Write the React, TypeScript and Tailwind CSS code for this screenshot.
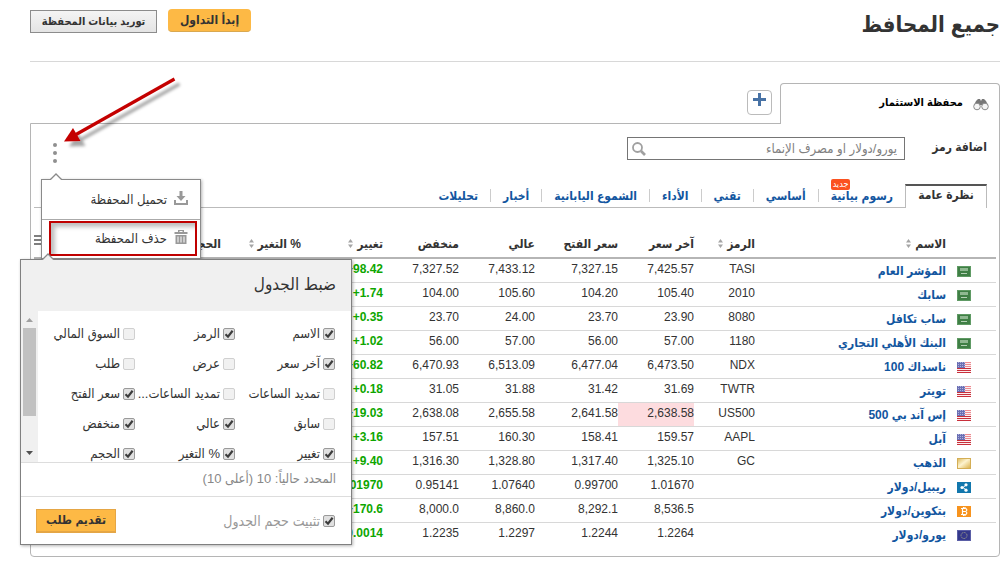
import { useState } from "react";

type Flag = "sa" | "us" | "gold" | "xrp" | "btc" | "eu";

type Row = {
  flag: Flag;
  name: string;
  symbol: string;
  last: string;
  open: string;
  high: string;
  low: string;
  change: string;
  down?: boolean;
};

const rows: Row[] = [
  { flag: "sa", name: "المؤشر العام", symbol: "TASI", last: "7,425.57", open: "7,327.15", high: "7,433.12", low: "7,327.52", change: "+98.42" },
  { flag: "sa", name: "سابك", symbol: "2010", last: "105.40", open: "104.20", high: "105.60", low: "104.00", change: "+1.74" },
  { flag: "sa", name: "ساب تكافل", symbol: "8080", last: "23.90", open: "23.70", high: "24.00", low: "23.70", change: "+0.35" },
  { flag: "sa", name: "البنك الأهلي التجاري", symbol: "1180", last: "57.00", open: "56.00", high: "57.00", low: "56.00", change: "+1.02" },
  { flag: "us", name: "ناسداك 100", symbol: "NDX", last: "6,473.50", open: "6,477.04", high: "6,513.09", low: "6,470.93", change: "+60.82" },
  { flag: "us", name: "تويتر", symbol: "TWTR", last: "31.69", open: "31.42", high: "31.88", low: "31.05", change: "+0.18" },
  { flag: "us", name: "إس آند بي 500", symbol: "US500", last: "2,638.58", open: "2,641.58", high: "2,655.58", low: "2,638.08", change: "+19.03", down: true },
  { flag: "us", name: "آبل", symbol: "AAPL", last: "159.57", open: "158.41", high: "160.30", low: "157.51", change: "+3.16" },
  { flag: "gold", name: "الذهب", symbol: "GC", last: "1,325.10", open: "1,317.40", high: "1,328.80", low: "1,316.30", change: "+9.40" },
  { flag: "xrp", name: "ريبيل/دولار", symbol: "", last: "1.01670", open: "0.99700", high: "1.07640", low: "0.95141", change: "+0.01970" },
  { flag: "btc", name: "بتكوين/دولار", symbol: "", last: "8,536.5", open: "8,292.1", high: "8,860.0", low: "8,000.0", change: "+170.6" },
  { flag: "eu", name: "يورو/دولار", symbol: "", last: "1.2264", open: "1.2244", high: "1.2297", low: "1.2235", change: "+0.0014" },
];

const views = ["رسوم بيانية", "أساسي", "تقني", "الأداء", "الشموع اليابانية", "أخبار", "تحليلات"];

const options = [
  { label: "الاسم", on: true },
  { label: "الرمز", on: true },
  { label: "السوق المالي", on: false },
  { label: "آخر سعر", on: true },
  { label: "عرض", on: false },
  { label: "طلب", on: false },
  { label: "تمديد الساعات", on: false },
  { label: "تمديد الساعات...", on: false },
  { label: "سعر الفتح", on: true },
  { label: "سابق", on: false },
  { label: "عالي", on: true },
  { label: "منخفض", on: true },
  { label: "تغيير", on: true },
  { label: "% التغير", on: true },
  { label: "الحجم", on: true },
];

function FlagIcon({ flag }: { flag: Flag }) {
  return (
    <svg viewBox="0 0 14 11" className="block h-[11px] w-[14px]" aria-hidden="true">
      {flag === "sa" && (
        <>
          <rect width="14" height="11" fill="#3f7f45" />
          <rect x="0.5" y="0.5" width="13" height="10" fill="none" stroke="#5f9a64" />
          <rect x="3" y="2" width="8" height="3" fill="#8fb891" />
          <rect x="4" y="7" width="6" height="1" fill="#b4d0b5" />
        </>
      )}
      {flag === "us" && (
        <>
          <rect width="14" height="11" fill="#fbeeee" />
          {[0, 2, 4, 6, 8, 10].map((y) => (
            <rect key={y} y={y} width="14" height="1" fill={y > 5 ? "#c9303c" : "#ee8a90"} />
          ))}
          <rect width="8" height="6" fill="#6a6fb4" />
          {[1, 3, 5].map((y) =>
            [1, 3, 5, 7].map((x) => <rect key={`${x}-${y}`} x={x} y={y - 1} width="1" height="1" fill="#aeb1da" />)
          )}
        </>
      )}
      {flag === "gold" && (
        <>
          <defs>
            <linearGradient id="gold" x1="0" y1="0" x2="1" y2="1">
              <stop offset="0" stopColor="#dcb85a" />
              <stop offset="0.45" stopColor="#fdf3cf" />
              <stop offset="1" stopColor="#d9ae45" />
            </linearGradient>
          </defs>
          <rect x="0.5" y="0.5" width="13" height="10" fill="url(#gold)" stroke="#d4ae55" />
        </>
      )}
      {flag === "xrp" && (
        <>
          <rect width="14" height="11" fill="#1277ad" />
          <path d="M9 3 6 5.5 9 8" stroke="#fff" fill="none" />
          <circle cx="9" cy="2.8" r="1.6" fill="#fff" />
          <circle cx="9" cy="8.2" r="1.6" fill="#fff" />
          <circle cx="5" cy="5.5" r="1.6" fill="#fff" />
        </>
      )}
      {flag === "btc" && (
        <>
          <rect width="14" height="11" fill="#f7931e" />
          <path
            d="M4 2.5H8.3A1.4 1.4 0 0 1 8.3 5.5H5.5M8.3 5.5A1.5 1.5 0 0 1 8.3 8.5H4M5.5 2.5V8.5M6.5 1V2.5M8 1V2.5M6.5 8.5V10M8 8.5V10"
            stroke="#fff"
            strokeWidth="1.2"
            fill="none"
          />
        </>
      )}
      {flag === "eu" && (
        <>
          <rect width="14" height="11" fill="#34388a" />
          <rect x="0.5" y="0.5" width="13" height="10" fill="none" stroke="#5a5ea6" />
          <circle cx="7" cy="5.5" r="3" fill="none" stroke="#a3a58c" strokeDasharray="1 0.7" />
        </>
      )}
    </svg>
  );
}

function SortIcon() {
  return (
    <svg viewBox="0 0 5 9" className="h-[9px] w-[5px]" aria-hidden="true">
      <path d="M0 3.5 2.5 0 5 3.5zM0 5.5 2.5 9 5 5.5z" fill="#a5a5a5" />
    </svg>
  );
}

function Caret({ fill }: { fill: string }) {
  return (
    <svg viewBox="0 0 12 7" className="h-[7px] w-3" aria-hidden="true">
      <path d="M0 7 6 1 12 7z" fill={fill} />
      <path d="M0 6.5H0.5L6 1 11.5 6.5H12" fill="none" stroke="#8a8a8a" strokeWidth="1.3" />
    </svg>
  );
}

function CheckBox({ label, on }: { label: string; on: boolean }) {
  const [checked, setChecked] = useState(on);
  return (
    <label className="flex items-center gap-[3px] whitespace-nowrap">
      <span className="relative block size-3 shrink-0">
        <input
          type="checkbox"
          checked={checked}
          onChange={(e) => setChecked(e.target.checked)}
          className="block size-3 appearance-none rounded-xs border border-[#d0d0d0] bg-[#f1f1f1] checked:border-[#9a9a9a] checked:bg-[#e0e0e0]"
        />
        {checked && (
          <svg viewBox="0 0 12 12" className="pointer-events-none absolute inset-0 size-3" aria-hidden="true">
            <path d="M2.5 6.2 5 8.7 9.6 2.8" fill="none" stroke="#3c3c3c" strokeWidth="2.2" />
          </svg>
        )}
      </span>
      {label}
    </label>
  );
}

function PortfolioMenu() {
  return (
    <div className="absolute top-[55px] left-[10px] z-10 w-40 border border-[#8a8a8a] bg-white text-[13px] text-[#333] shadow-[1px_1px_3px_rgba(0,0,0,0.3)]">
      <div className="absolute -top-[7px] left-2">
        <Caret fill="#fff" />
      </div>
      <button type="button" className="flex h-10 w-full items-center gap-[7px] border-b border-[#aaa] px-3">
        <svg viewBox="0 0 14 14" className="-mt-1 size-[14px]" aria-hidden="true">
          <path d="M5.5 0H8.5V5H11.5L7 10 2.5 5H5.5zM0 9H2V12H12V9H14V14H0z" fill="#999" />
        </svg>
        تحميل المحفظة
      </button>
      <button type="button" className="flex h-[38px] w-full items-center gap-[7px] px-3">
        <svg viewBox="0 0 14 14" className="-mt-1 size-[14px]" aria-hidden="true">
          <path d="M4 0H10V2H13.5V4H0.5V2H4zM5.5 1V2H8.5V1z" fill="#999" fillRule="evenodd" />
          <path
            d="M1.5 5H12.5V14H1.5zM3.5 6.5V12.5H4.5V6.5zM6.5 6.5V12.5H7.5V6.5zM9.5 6.5V12.5H10.5V6.5z"
            fill="#999"
            fillRule="evenodd"
          />
        </svg>
        حذف المحفظة
      </button>
      <div className="pointer-events-none absolute top-[41px] right-[3px] left-[7px] h-[35px] border-2 border-[#c00000] shadow-[inset_4px_4px_4px_rgba(0,0,0,0.25)]" />
    </div>
  );
}

function TableSettings() {
  return (
    <section
      aria-label="ضبط الجدول"
      className="absolute top-[135px] -left-[11px] z-20 w-[332px] border border-[#808080] bg-white text-[13px] text-[#333] shadow-[1px_1px_3px_rgba(0,0,0,0.3)]"
    >
      <div className="absolute -top-[7px] left-[21px]">
        <Caret fill="#f0f0f0" />
      </div>
      <h2 className="h-[51px] bg-[#f0f0f0] px-[15px] text-[17px] leading-[50px]">ضبط الجدول</h2>
      <div className="flex h-[151px] overflow-hidden">
        <div className="grid flex-1 auto-rows-[30px] grid-cols-[100px_100px_1fr] pt-2 pr-4">
          {options.map((option) => (
            <CheckBox key={option.label} {...option} />
          ))}
        </div>
        <div className="flex w-[17px] flex-col items-center bg-[#f0f0f0] py-[7px]" aria-hidden="true">
          <svg viewBox="0 0 7 4" className="h-1 w-[7px]">
            <path d="M0 4 3.5 0 7 4z" fill="#a0a0a0" />
          </svg>
          <div className="mt-[6px] h-[88px] w-[13px] bg-[#c1c1c1]" />
          <svg viewBox="0 0 7 4" className="mt-auto h-1 w-[7px]">
            <path d="M0 0H7L3.5 4z" fill="#505050" />
          </svg>
        </div>
      </div>
      <p className="h-[35px] border-y border-[#ddd] px-[15px] leading-8 text-[#888]">المحدد حالياً: 10 (أعلى 10)</p>
      <div className="flex h-[47px] items-center justify-between pr-4 pl-[15px] text-sm text-[#999]">
        <CheckBox label="تثبيت حجم الجدول" on />
        <button type="button" className="h-6 w-20 border border-b-2 border-[#e5a645] bg-[#fdb945] text-xs leading-5 font-bold text-[#333]">
          تقديم طلب
        </button>
      </div>
    </section>
  );
}

export default function App() {
  return (
    <main
      dir="rtl"
      className="relative bg-white pr-1 pb-3 pl-[30px] font-['Liberation_Sans','DejaVu_Sans_Condensed','DejaVu_Sans',sans-serif] text-xs text-[#333]"
    >
      <header className="flex h-[62px] items-start justify-between border-b border-[#d8d8d8] pt-[9px]">
        <h1 className="text-[22px] leading-8 font-bold">جميع المحافظ</h1>
        <div className="flex items-start gap-[11px]">
          <button type="button" className="h-[23px] w-[83px] rounded-sm border-b border-[#d9a850] bg-[#fdb945] font-bold">
            إبدأ التداول
          </button>
          <button
            type="button"
            className="mt-px h-[23px] w-[127px] border border-[#8c8c8c] bg-linear-to-b from-[#f4f4f4] to-[#e4e4e4] text-[11px] font-bold"
          >
            توريد بيانات المحفظة
          </button>
        </div>
      </header>

      <nav className="mt-[21px] flex items-start gap-2">
        <a
          href="#portfolio"
          className="z-10 -mb-px flex h-[41px] w-[220px] items-center gap-[10px] rounded-t-sm border border-b-0 border-[#b5b5b5] bg-white px-[10px] pb-1 text-[11px] font-bold text-black"
        >
          <svg viewBox="0 0 16 13" className="mt-1 h-[13px] w-4" aria-hidden="true">
            <path d="M3 3 5 1H7L8 3 9 1H11L13 3 15 7H1z" fill="#777" />
            <circle cx="4" cy="8.5" r="3.3" fill="#f5f5f5" stroke="#8a8a8a" />
            <circle cx="12" cy="8.5" r="3.3" fill="#f5f5f5" stroke="#8a8a8a" />
          </svg>
          محفظة الاستثمار
        </a>
        <button
          type="button"
          aria-label="إضافة محفظة"
          className="mt-[7px] flex h-[25px] w-[25px] justify-center rounded-sm border border-[#bbb] bg-white pt-[2px]"
        >
          <svg viewBox="0 0 13 13" className="size-[13px]" aria-hidden="true">
            <path d="M5 0H8V5H13V8H8V13H5V8H0V5H5z" fill="#4872a5" />
          </svg>
        </button>
      </nav>

      <div className="relative rounded-b-sm border border-[#b5b5b5] px-[3px] pb-[9px]">
        <div className="flex items-center pt-[13px] pr-[9px]">
          <label htmlFor="symbol" className="w-[82px] pb-1 font-bold">
            اضافة رمز
          </label>
          <div className="relative w-[278px]">
            <input
              id="symbol"
              type="text"
              placeholder="يورو/دولار او مصرف الإنماء"
              className="block h-[23px] w-full border border-[#757575] px-[7px] text-[13px] placeholder:text-[#808080]"
            />
            <svg viewBox="0 0 14 14" className="absolute top-[5px] left-[5px] size-[14px]" aria-hidden="true">
              <circle cx="5.5" cy="5.5" r="4.5" fill="none" stroke="#a0a0a0" strokeWidth="1.8" />
              <path d="M9 9 13 13" stroke="#a0a0a0" strokeWidth="2.6" />
            </svg>
          </div>
        </div>

        <nav className="mt-6 mr-[9px] flex h-6 border-b border-[#bbb]">
          <a
            href="#overview"
            className="flex h-6 w-[82px] items-center justify-center border-x border-t-2 border-x-[#bbb] border-t-[#555] bg-white pb-1 font-bold"
          >
            نظرة عامة
          </a>
          <ul className="flex items-center divide-x divide-[#ccc]">
            {views.map((view, i) => (
              <li key={view} className="relative flex h-[13px] items-center px-3">
                <a href="#view" className="font-bold whitespace-nowrap text-[#1256a0]">
                  {view}
                </a>
                {i === 0 && (
                  <span className="absolute -top-[10px] left-3 h-[11px] rounded-xs bg-[#fb5220] px-[2px] text-[9px] leading-[11px] text-white">
                    جديد
                  </span>
                )}
              </li>
            ))}
          </ul>
        </nav>

        <table className="mt-[22px] w-full table-fixed border-collapse">
          <colgroup>
            <col className="w-[50px]" />
            <col />
            <col className="w-[61px]" />
            <col className="w-[76px]" />
            <col className="w-[83px]" />
            <col className="w-[76px]" />
            <col className="w-[76px]" />
            <col className="w-[82px]" />
            <col className="w-[80px]" />
            <col className="w-[150px]" />
            <col className="w-[37px]" />
          </colgroup>
          <thead>
            <tr className="h-7 border-b-2 border-[#b5b5b5] text-right whitespace-nowrap">
              <th />
              <th>
                <span className="flex items-center gap-1">الاسم <SortIcon /></span>
              </th>
              <th>
                <span className="flex items-center gap-1">الرمز <SortIcon /></span>
              </th>
              <th>آخر سعر</th>
              <th>سعر الفتح</th>
              <th>عالي</th>
              <th>منخفض</th>
              <th>
                <span className="flex items-center gap-1">تغيير <SortIcon /></span>
              </th>
              <th>
                <span className="flex items-center gap-1">% التغير <SortIcon /></span>
              </th>
              <th>الحجم</th>
              <th className="pb-2">
                <button type="button" aria-label="ضبط الجدول" className="mr-auto block w-[9px]">
                  <svg viewBox="0 0 9 10" className="h-[10px] w-[9px]" aria-hidden="true">
                    <path d="M0 1H9M0 5H9M0 9H9" stroke="#555" strokeWidth="1.5" />
                  </svg>
                </button>
              </th>
            </tr>
          </thead>
          <tbody>
            {rows.map((row) => (
              <tr key={row.name} className="h-6 border-b border-[#d8d8d8] text-right leading-5 last:border-b-0">
                <td className="pt-[2px] pr-[25px]">
                  <FlagIcon flag={row.flag} />
                </td>
                <td className="font-bold whitespace-nowrap text-[#1256a0]">
                  <a href="#quote">{row.name}</a>
                </td>
                <td dir="ltr" className="pb-[3px]">{row.symbol}</td>
                <td dir="ltr" className={row.down ? "bg-[#fddcdf] pb-[3px]" : "pb-[3px]"}>{row.last}</td>
                <td dir="ltr" className="pb-[3px]">{row.open}</td>
                <td dir="ltr" className="pb-[3px]">{row.high}</td>
                <td dir="ltr" className="pb-[3px]">{row.low}</td>
                <td dir="ltr" className="pb-[3px] font-bold text-[#0ea600]">{row.change}</td>
                <td />
                <td />
                <td />
              </tr>
            ))}
          </tbody>
        </table>

        <button type="button" aria-label="خيارات المحفظة" className="absolute top-[19px] left-[22px]">
          <svg viewBox="0 0 4 20" className="h-5 w-1" aria-hidden="true">
            <circle cx="2" cy="2" r="2" fill="#8f8f8f" />
            <circle cx="2" cy="10" r="2" fill="#8f8f8f" />
            <circle cx="2" cy="18" r="2" fill="#8f8f8f" />
          </svg>
        </button>
        <PortfolioMenu />
        <TableSettings />
      </div>

      <svg viewBox="0 0 130 84" className="pointer-events-none absolute top-[70px] left-[56px] h-[84px] w-[130px]" aria-hidden="true">
        <defs>
          <filter id="arrow-shadow" x="-20%" y="-20%" width="140%" height="140%">
            <feDropShadow dx="5" dy="5" stdDeviation="1.5" floodColor="#000" floodOpacity="0.35" />
          </filter>
        </defs>
        <g filter="url(#arrow-shadow)">
          <path d="M118.500 9 20 64.500" stroke="#c40000" strokeWidth="3.2" />
          <path d="M8 71.500 17 58 24.500 71z" fill="#c40000" />
        </g>
      </svg>
    </main>
  );
}
